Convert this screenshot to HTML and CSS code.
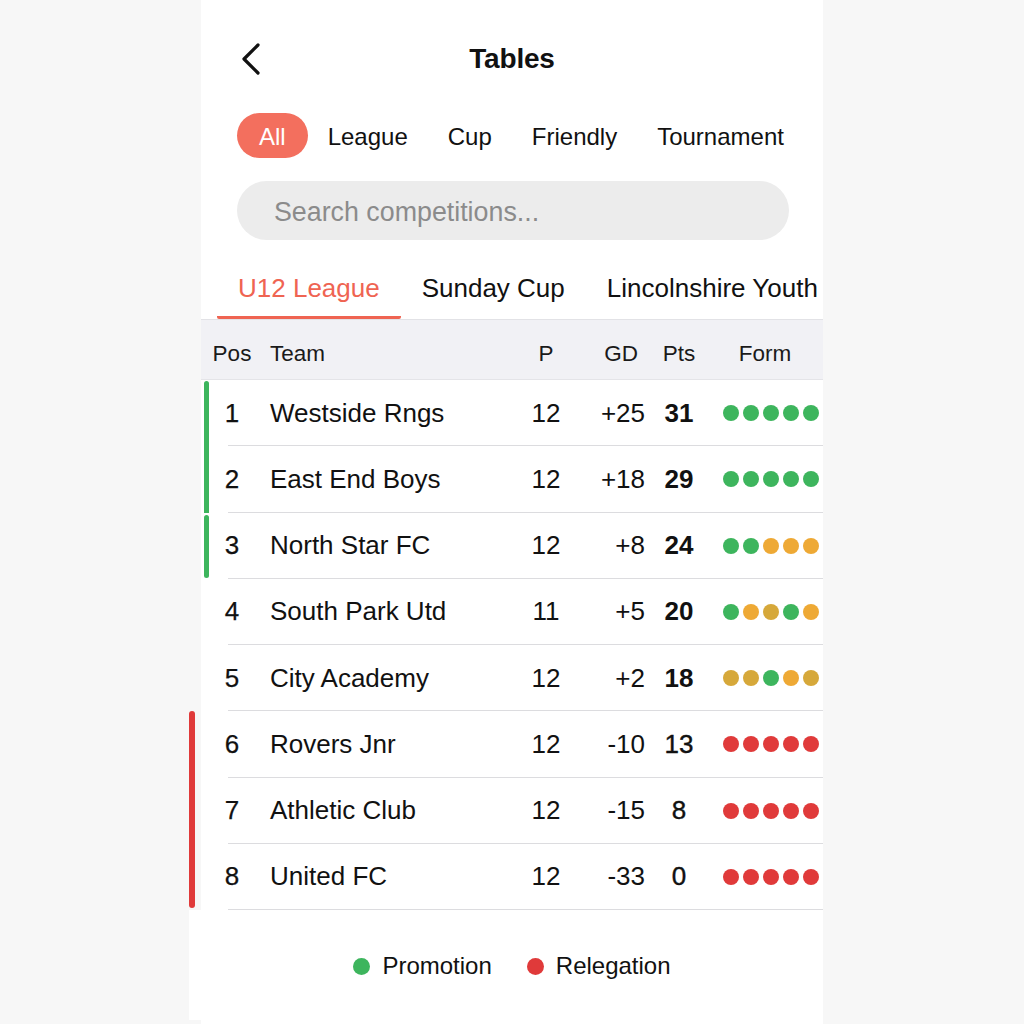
FILE: index.html
```html
<!DOCTYPE html>
<html lang="en">
<head>
<meta charset="utf-8">
<title>Tables</title>
<link rel="stylesheet" href="styles.css">
</head>
<body>
<div class="screen">
  <header class="topbar">
    <button class="back" aria-label="Back">
      <svg width="18" height="32" viewBox="0 0 18 32"><path d="M16 2 L2 16 L16 30" fill="none" stroke="#111" stroke-width="3.2" stroke-linecap="round" stroke-linejoin="round"/></svg>
    </button>
    <h1 class="title">Tables</h1>
  </header>

  <nav class="chips">
    <span class="chip active">All</span>
    <span class="chip">League</span>
    <span class="chip">Cup</span>
    <span class="chip">Friendly</span>
    <span class="chip">Tournament</span>
  </nav>

  <div class="search">Search competitions...</div>

  <div class="tabs">
    <span class="tab active">U12 League</span>
    <span class="tab">Sunday Cup</span>
    <span class="tab">Lincolnshire Youth League</span>
  </div>

  <div class="table">
    <div class="row head">
      <span class="pos">Pos</span>
      <span class="team">Team</span>
      <span class="num">P</span>
      <span class="gd">GD</span>
      <span class="num">Pts</span>
      <span class="formhead">Form</span>
    </div>

    <div class="row promo first">
      <span class="pos">1</span><span class="team">Westside Rngs</span><span class="num">12</span><span class="gd">+25</span><span class="pts">31</span>
      <span class="form"><i class="w"></i><i class="w"></i><i class="w"></i><i class="w"></i><i class="w"></i></span>
    </div>
    <div class="row promo">
      <span class="pos">2</span><span class="team">East End Boys</span><span class="num">12</span><span class="gd">+18</span><span class="pts">29</span>
      <span class="form"><i class="w"></i><i class="w"></i><i class="w"></i><i class="w"></i><i class="w"></i></span>
    </div>
    <div class="row promo single">
      <span class="pos">3</span><span class="team">North Star FC</span><span class="num">12</span><span class="gd">+8</span><span class="pts">24</span>
      <span class="form"><i class="w"></i><i class="w"></i><i class="d"></i><i class="d"></i><i class="d"></i></span>
    </div>
    <div class="row">
      <span class="pos">4</span><span class="team">South Park Utd</span><span class="num">11</span><span class="gd">+5</span><span class="pts">20</span>
      <span class="form"><i class="w"></i><i class="d"></i><i class="d2"></i><i class="w"></i><i class="d"></i></span>
    </div>
    <div class="row">
      <span class="pos">5</span><span class="team">City Academy</span><span class="num">12</span><span class="gd">+2</span><span class="pts">18</span>
      <span class="form"><i class="d2"></i><i class="d2"></i><i class="w"></i><i class="d"></i><i class="d2"></i></span>
    </div>
    <div class="row releg first">
      <span class="pos">6</span><span class="team">Rovers Jnr</span><span class="num">12</span><span class="gd">-10</span><span class="pts">13</span>
      <span class="form"><i class="l"></i><i class="l"></i><i class="l"></i><i class="l"></i><i class="l"></i></span>
    </div>
    <div class="row releg">
      <span class="pos">7</span><span class="team">Athletic Club</span><span class="num">12</span><span class="gd">-15</span><span class="pts">8</span>
      <span class="form"><i class="l"></i><i class="l"></i><i class="l"></i><i class="l"></i><i class="l"></i></span>
    </div>
    <div class="row releg last">
      <span class="pos">8</span><span class="team">United FC</span><span class="num">12</span><span class="gd">-33</span><span class="pts">0</span>
      <span class="form"><i class="l"></i><i class="l"></i><i class="l"></i><i class="l"></i><i class="l"></i></span>
    </div>
  </div>

  <footer class="legend">
    <span class="key"><i class="w"></i>Promotion</span>
    <span class="key"><i class="l"></i>Relegation</span>
  </footer>
</div>
</body>
</html>
```

FILE: styles.css
```css
* { box-sizing: border-box; }

html, body {
  margin: 0;
  padding: 0;
  background: #f7f7f7;
  font-family: "Liberation Sans", Arial, sans-serif;
  color: #111;
}

.screen {
  width: 622px;
  margin: 0 auto;
  background: #fff;
  min-height: 1024px;
}

/* top bar */
.topbar {
  height: 113px;
  display: flex;
  justify-content: center;
  position: relative;
}
.back {
  position: absolute;
  left: 41px;
  top: 42px;
  border: 0;
  background: none;
  padding: 0;
  width: 20px;
  height: 34px;
  display: flex;
  align-items: center;
}
.title {
  margin: 43px 0 0;
  font-size: 28px;
  font-weight: 700;
  letter-spacing: -0.2px;
  line-height: 32px;
}

/* filter chips */
.chips {
  display: flex;
  align-items: center;
  padding-left: 36px;
  height: 45px;
}
.chip {
  font-size: 24px;
  padding: 0 20px;
  height: 45px;
  line-height: 47px;
  border-radius: 23px;
  color: #111;
}
.chip.active {
  background: #f36f5e;
  color: #fff;
  padding: 0 22px;
}

/* search */
.search {
  margin: 23px 34px 0 36px;
  height: 59px;
  border-radius: 30px;
  background: #ececec;
  color: #8b8b8b;
  font-size: 26.8px;
  line-height: 63px;
  padding-left: 37px;
}

/* competition tabs */
.tabs {
  margin-top: 18px;
  display: flex;
  padding-left: 16px;
  border-bottom: 1px solid #e2e2e6;
  overflow: hidden;
  white-space: nowrap;
}
.tab {
  font-size: 26px;
  line-height: 30px;
  padding: 15px 21px 13px;
  border-bottom: 3.5px solid transparent;
  flex: none;
}
.tab.active {
  color: #ef6452;
  border-bottom-color: #ef6452;
  border-radius: 0 0 2px 2px;
}

/* standings */
.table {
  position: relative;
}
.row {
  display: grid;
  grid-template-columns: 62px 258px 50px 80px 56px 1fr;
  align-items: center;
  height: 66.25px;
  font-size: 26px;
  position: relative;
  background: linear-gradient(#dcdcdf, #dcdcdf) 27px 100% / calc(100% - 27px) 1px no-repeat;
}
.row.head {
  height: 60px;
  padding-top: 9px;
  background: #f1f1f5;
  font-size: 22.5px;
  color: #1a1a1a;
  border-bottom: 1px solid #e4e4e8;
}
.pos {
  text-align: center;
}
.row:not(.head) .pos {
  -webkit-text-stroke: 0.25px #111;
}
.team {
  padding-left: 7px;
  white-space: nowrap;
}
.num {
  text-align: center;
}
.gd {
  text-align: right;
  padding-right: 6px;
}
.head .gd {
  padding-right: 13px;
}
.pts {
  text-align: center;
  font-weight: 700;
}
.row.releg .pts {
  font-weight: 400;
  -webkit-text-stroke: 0.4px #111;
}
.formhead {
  text-align: center;
}
.form {
  display: flex;
  gap: 4px;
  padding-left: 16px;
}
.form i, .key i {
  display: block;
  width: 16px;
  height: 16px;
  border-radius: 50%;
}
i.w { background: #3db55d; }
i.d { background: #eea935; }
i.d2 { background: #d6a83a; }
i.l { background: #e03a3a; }

/* zone markers down the left edge */
.row.promo::before,
.row.releg::before {
  content: "";
  position: absolute;
  top: 0;
  bottom: 0;
  width: 5px;
}
.row.promo::before {
  left: 3px;
  background: #3db55d;
}
.row.promo.first::before { top: 1px; border-radius: 3px 3px 0 0; }
.row.promo.single::before { top: 2px; bottom: 1px; border-radius: 3px; }
.row.releg::before {
  left: -12px;
  width: 6px;
  background: #e03a3a;
}
.row.releg.first::before { border-radius: 3px 3px 0 0; }
.row.releg.last::before { bottom: 2px; border-radius: 0 0 3px 3px; }

/* legend */
.legend {
  margin-left: -12px;
  background: #fff;
  display: flex;
  justify-content: center;
  gap: 35px;
  padding: 42px 0 40px 12px;
  font-size: 24px;
  line-height: 28px;
}
.key {
  display: flex;
  align-items: center;
  gap: 12px;
}
.key i {
  width: 17px;
  height: 17px;
}
```
